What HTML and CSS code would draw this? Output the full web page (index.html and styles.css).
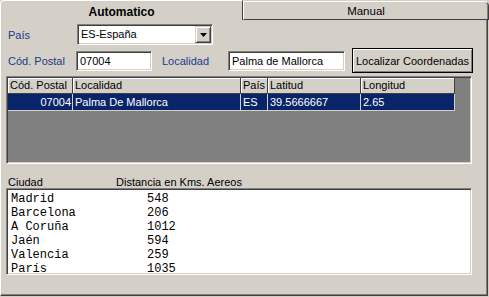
FILE: index.html
```html
<!DOCTYPE html>
<html>
<head>
<meta charset="utf-8">
<link rel="stylesheet" href="styles.css">
</head>
<body>
<div class="window">
  <div class="tabs">
    <div class="tab tab-active">Automatico</div>
    <div class="tab tab-inactive">Manual</div>
  </div>
  <div class="panel">
    <div class="row row1">
      <span class="lbl lbl-pais">País</span>
      <div class="combo">
        <span class="combo-text">ES-España</span>
        <span class="combo-btn"><svg width="7" height="4" viewBox="0 0 7 4"><path d="M0 0H7L3.5 4Z" fill="#000"/></svg></span>
      </div>
    </div>
    <div class="row row2">
      <span class="lbl lbl-cp">Cód. Postal</span>
      <div class="field field-cp">07004</div>
      <span class="lbl lbl-loc">Localidad</span>
      <div class="field field-loc">Palma de Mallorca</div>
      <button class="btn">Localizar Coordenadas</button>
    </div>
    <div class="grid">
      <div class="grow ghead">
        <div class="cell c1">Cód. Postal</div>
        <div class="cell c2">Localidad</div>
        <div class="cell c3">País</div>
        <div class="cell c4">Latitud</div>
        <div class="cell c5">Longitud</div>
      </div>
      <div class="grow gsel">
        <div class="cell c1 num">07004</div>
        <div class="cell c2">Palma De Mallorca</div>
        <div class="cell c3">ES</div>
        <div class="cell c4">39.5666667</div>
        <div class="cell c5">2.65</div>
      </div>
    </div>
    <div class="listhead">
      <span class="lh1">Ciudad</span>
      <span class="lh2">Distancia en Kms. Aereos</span>
    </div>
    <div class="list">
      <div class="lrow"><span class="city">Madrid</span><span>548</span></div>
      <div class="lrow"><span class="city">Barcelona</span><span>206</span></div>
      <div class="lrow"><span class="city">A Coruña</span><span>1012</span></div>
      <div class="lrow"><span class="city">Jaén</span><span>594</span></div>
      <div class="lrow"><span class="city">Valencia</span><span>259</span></div>
      <div class="lrow"><span class="city">París</span><span>1035</span></div>
    </div>
  </div>
</div>
</body>
</html>
```

FILE: styles.css
```css
* { box-sizing: border-box; }
html, body {
  margin: 0;
  padding: 0;
  background: #d4d0c8;
  width: 489px;
  height: 297px;
  overflow: hidden;
  font-family: "Liberation Sans", Arial, sans-serif;
  font-size: 11px;
  color: #000;
}
.window {
  width: 489px;
  height: 297px;
}
.tabs {
  display: flex;
  height: 20px;
  align-items: flex-start;
}
.tab {
  text-align: center;
  background: #d4d0c8;
}
.tab-active {
  width: 243px;
  height: 20px;
  border-left: 1px solid #fff;
  border-top: 1px solid #fff;
  border-right: 1px solid #404040;
  border-top-left-radius: 4px;
  font-weight: bold;
  line-height: 22px;
  font-size: 12px;
}
.tab-inactive {
  flex: 1;
  margin-top: 1px;
  height: 19px;
  border-left: 1px solid #fff;
  border-top: 1px solid #fff;
  border-right: 1px solid #404040;
  border-bottom: 1px solid #404040;
  border-top-right-radius: 5px;
  box-shadow: inset -1px 0 #808080;
  line-height: 19px;
  font-size: 11.5px;
}
.panel {
  width: 488px;
  height: 276px;
  border-left: 1px solid #fff;
  border-right: 1px solid #404040;
  border-bottom: 1px solid #404040;
  box-shadow: inset -1px -1px #808080;
  padding: 0 0 0 5px;
  display: flex;
  flex-direction: column;
}
.row {
  display: flex;
  align-items: center;
}
.row1 {
  margin-top: 4px;
  height: 21px;
}
.row2 {
  margin-top: 3px;
  height: 25px;
}
.lbl {
  color: #22388a;
  padding-left: 2px;
  font-size: 11px;
}
.lbl-pais { width: 71px; }
.lbl-cp { width: 70px; }
.lbl-loc { width: 68px; margin-left: 8px; }
.combo {
  width: 136px;
  height: 21px;
  background: #fff;
  border-top: 1px solid #808080;
  border-left: 1px solid #808080;
  border-right: 1px solid #fff;
  border-bottom: 1px solid #fff;
  box-shadow: inset 1px 1px #404040, inset -1px -1px #d4d0c8;
  padding: 1px;
  display: flex;
  align-items: stretch;
}
.combo-text {
  flex: 1;
  padding-left: 2px;
  line-height: 17px;
  font-size: 11px;
}
.combo-btn {
  width: 16px;
  background: #d4d0c8;
  border-top: 1px solid #d4d0c8;
  border-left: 1px solid #d4d0c8;
  border-right: 1px solid #404040;
  border-bottom: 1px solid #404040;
  box-shadow: inset 1px 1px #fff, inset -1px -1px #808080;
  display: flex;
  align-items: center;
  justify-content: center;
}
.field {
  height: 20px;
  background: #fff;
  border-top: 1px solid #808080;
  border-left: 1px solid #808080;
  border-right: 1px solid #fff;
  border-bottom: 1px solid #fff;
  box-shadow: inset 1px 1px #404040, inset -1px -1px #d4d0c8;
  padding-left: 3px;
  line-height: 18px;
  font-size: 11px;
  white-space: nowrap;
  overflow: hidden;
}
.field-cp { width: 76px; }
.field-loc { width: 117px; }
.btn {
  margin-left: 7px;
  width: 121px;
  height: 25px;
  padding: 0;
  background: #d4d0c8;
  border: 1px solid #000;
  box-shadow: inset 1px 1px #fff, inset -1px -1px #808080;
  font-family: "Liberation Sans", Arial, sans-serif;
  font-size: 11px;
  color: #000;
}
.grid {
  margin-top: 3px;
  width: 466px;
  height: 88px;
  background: #808080;
  border-top: 1px solid #808080;
  border-left: 1px solid #808080;
  border-right: 1px solid #fff;
  border-bottom: 1px solid #fff;
  box-shadow: inset 1px 1px #404040, inset -1px -1px #d4d0c8;
  padding: 1px;
}
.grow {
  display: flex;
  width: 447px;
}
.cell {
  padding-left: 2px;
  white-space: nowrap;
  overflow: hidden;
  font-size: 11px;
}
.c1 { width: 65px; }
.c2 { width: 168px; }
.c3 { width: 27px; }
.c4 { width: 93px; }
.c5 { width: 94px; }
.ghead { height: 16px; }
.ghead .cell {
  background: #d4d0c8;
  border-right: 1px solid #404040;
  border-bottom: 1px solid #404040;
  box-shadow: inset 1px 1px #fff;
  line-height: 15px;
}
.gsel { height: 17px; }
.gsel .cell {
  background: #0a246a;
  color: #fff;
  border-right: 1px solid #d4d0c8;
  border-bottom: 1px solid #d4d0c8;
  line-height: 16px;
}
.gsel .num {
  text-align: right;
  padding-right: 1px;
}
.listhead {
  margin-top: 13px;
  height: 11px;
  display: flex;
  line-height: 11px;
  font-size: 11px;
}
.lh1 {
  width: 110px;
  padding-left: 2px;
}
.list {
  width: 466px;
  height: 87px;
  background: #fff;
  border-top: 1px solid #808080;
  border-left: 1px solid #808080;
  border-right: 1px solid #fff;
  border-bottom: 1px solid #fff;
  box-shadow: inset 1px 1px #404040, inset -1px -1px #d4d0c8;
  padding: 3px 0 0 4px;
  font-family: "Liberation Mono", "Courier New", monospace;
  font-size: 12px;
}
.lrow {
  display: flex;
  height: 14px;
  line-height: 14px;
}
.city {
  width: 136px;
}
```
